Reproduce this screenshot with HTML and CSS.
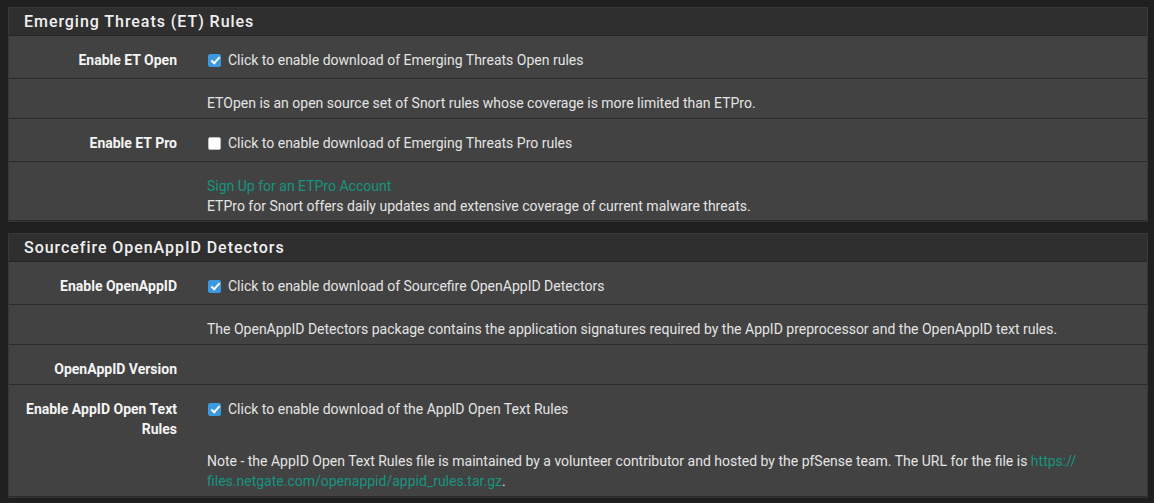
FILE: index.html
```html
<!DOCTYPE html>
<html>
<head>
<meta charset="utf-8">
<link rel="stylesheet" href="styles.css">
</head>
<body>
<div class="page">
  <section class="panel">
    <h2 class="panel-heading">Emerging Threats (ET) Rules</h2>
    <div class="row row-check">
      <div class="label">Enable ET Open</div>
      <div class="content"><label class="check"><span class="box on"></span>Click to enable download of Emerging Threats Open rules</label></div>
    </div>
    <div class="row row-help">
      <div class="label"></div>
      <div class="content">ETOpen is an open source set of Snort rules whose coverage is more limited than ETPro.</div>
    </div>
    <div class="row row-check">
      <div class="label">Enable ET Pro</div>
      <div class="content"><label class="check"><span class="box"></span>Click to enable download of Emerging Threats Pro rules</label></div>
    </div>
    <div class="row row-help row-tall">
      <div class="label"></div>
      <div class="content"><a class="link">Sign Up for an ETPro Account</a><br>ETPro for Snort offers daily updates and extensive coverage of current malware threats.</div>
    </div>
  </section>
  <section class="panel">
    <h2 class="panel-heading">Sourcefire OpenAppID Detectors</h2>
    <div class="row row-check">
      <div class="label">Enable OpenAppID</div>
      <div class="content"><label class="check"><span class="box on"></span>Click to enable download of Sourcefire OpenAppID Detectors</label></div>
    </div>
    <div class="row row-help">
      <div class="label"></div>
      <div class="content">The OpenAppID Detectors package contains the application signatures required by the AppID preprocessor and the OpenAppID text rules.</div>
    </div>
    <div class="row row-label">
      <div class="label">OpenAppID Version</div>
      <div class="content"></div>
    </div>
    <div class="row row-last">
      <div class="label">Enable AppID Open Text Rules</div>
      <div class="content">
        <label class="check"><span class="box on"></span>Click to enable download of the AppID Open Text Rules</label>
        <p class="note">Note - the AppID Open Text Rules file is maintained by a volunteer contributor and hosted by the pfSense team. The URL for the file is <a class="link">https://<br>files.netgate.com/openappid/appid_rules.tar.gz</a>.</p>
      </div>
    </div>
  </section>
</div>
</body>
</html>
```
FILE: styles.css
```css
html, body {
  margin: 0;
  padding: 0;
  background: #1f1f1f;
  height: 100%;
  overflow: hidden;
}
body {
  font-family: Roboto, "Liberation Sans", sans-serif;
  font-size: 14px;
  line-height: 20px;
  color: #e4e4e4;
}
.page {
  padding: 7px 6px 0 8px;
}
.panel {
  background: #424242;
  border: 1px solid #383838;
  border-bottom: 1px solid #333;
  margin-bottom: 11px;
}
.panel-heading {
  margin: 0;
  height: 27px;
  line-height: 28px;
  padding: 0 15px;
  background: #2f2f2f;
  border-bottom: 1px solid #262626;
  font-size: 16px;
  font-weight: 500;
  letter-spacing: 0.95px;
  color: #f0f0f0;
}
.row {
  display: grid;
  grid-template-columns: 183px 1fr;
  border-bottom: 1px solid #2b2b2b;
}
.label {
  padding-right: 15px;
  text-align: right;
  font-weight: 700;
  color: #f4f4f4;
}
.content {
  padding-left: 15px;
  padding-right: 15px;
}
.row-check { padding: 14px 0 8px; }
.row-help { padding: 14px 0 5px; }
.row-tall { padding-bottom: 4px; }
.row-label { padding: 14px 0 5px; }
.row-last { padding: 14px 0 5px; }
.check {
  display: flex;
  align-items: center;
}
.box {
  width: 13px;
  height: 13px;
  margin: 0 7px 0 1px;
  border-radius: 2px;
  background: #fff;
  border: 1px solid #bdbdbd;
  box-sizing: border-box;
  position: relative;
  flex: none;
}
.box.on {
  background: #3b99e0;
  border-color: #3b99e0;
}
.box.on::after {
  content: "";
  position: absolute;
  left: 3.5px;
  top: 0.5px;
  width: 3px;
  height: 7px;
  border: solid #fff;
  border-width: 0 2px 2px 0;
  transform: rotate(42deg);
}
.link {
  color: #159580;
  text-decoration: none;
}
.note {
  margin: 32px 0 0;
}
```
